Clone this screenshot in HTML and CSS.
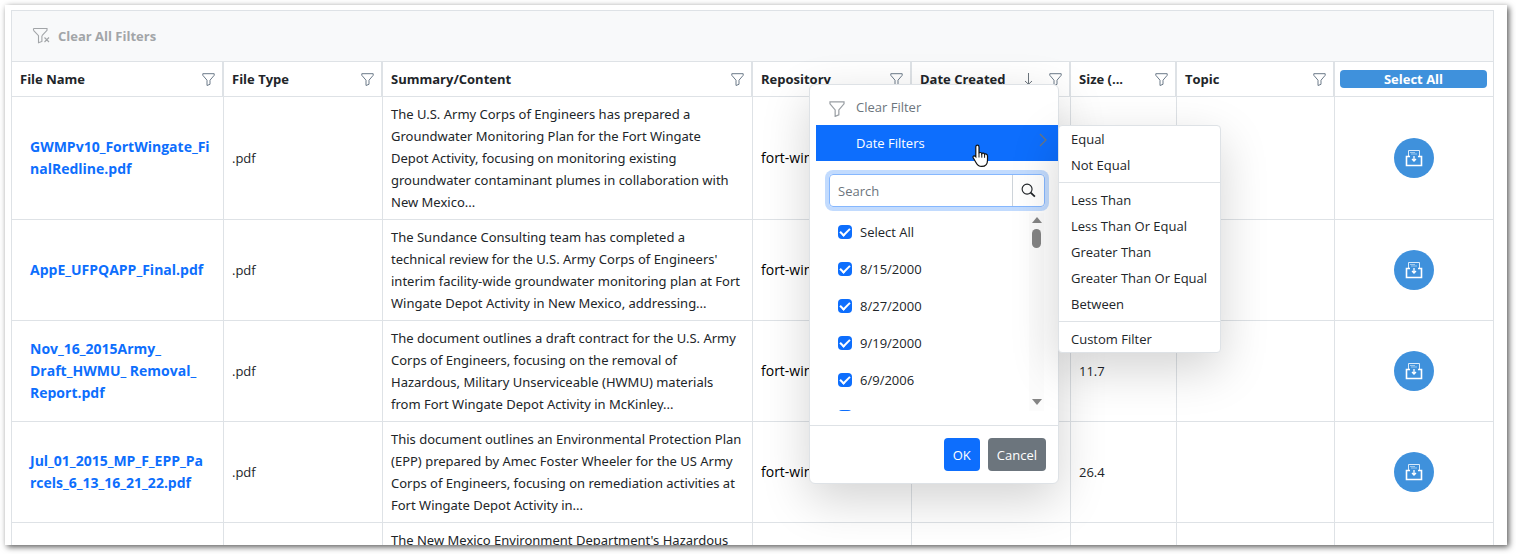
FILE: index.html
```html
<!DOCTYPE html>
<html lang="en">
<head>
<meta charset="UTF-8">
<meta name="viewport" content="width=device-width, initial-scale=1.0">
<title>Documents</title>
<link rel="stylesheet" href="styles.css">
</head>
<body>
<svg class="sprite" aria-hidden="true">
<symbol id="funnel" viewBox="0 0 13 13"><path d="M.8.7h11.4v1.6L8 7.2v4.1l-3 1.2V7.2L.8 2.3z" fill="none" stroke="currentColor"/></symbol>
<symbol id="inbox" viewBox="0 0 18 18">
<path d="M3.5 7V1.5h11V7" fill="none" stroke="#d9eafa"/>
<path d="M5 3.5h5M6 5h6" stroke="#9cc8ee"/>
<path d="M5 7.5H1.5v9h15v-9H13" fill="none" stroke="#fff" stroke-width="1.6"/>
<path d="M9 7v4.5M7 10l2 2 2-2" fill="none" stroke="#fff" stroke-width="1.3"/>
</symbol>
</svg>

<main class="window">
<div class="grid">
<div class="toolbar">
<button class="clear-all" type="button" disabled>
<svg class="clear-icon" viewBox="0 0 18 18"><path d="M1.5 1.5h13.5v1.8L10 8.7M1.5 3.3l5 5.4v7l3.4-1.3V8.7M1.5 1.5v1.8M12.5 10.5l4.5 4.5M17 10.5 12.5 15" fill="none" stroke="currentColor" stroke-width="1.1"/></svg>
Clear All Filters
</button>
</div>

<table>
<colgroup>
<col class="col-name"><col class="col-mid"><col class="col-summary"><col class="col-mid"><col class="col-mid"><col class="col-size"><col><col>
</colgroup>
<thead>
<tr>
<th><div class="head">File Name<svg class="funnel"><use href="#funnel"/></svg></div></th>
<th><div class="head">File Type<svg class="funnel"><use href="#funnel"/></svg></div></th>
<th><div class="head">Summary/Content<svg class="funnel"><use href="#funnel"/></svg></div></th>
<th><div class="head">Repository<svg class="funnel"><use href="#funnel"/></svg></div></th>
<th class="open">
<div class="head">Date Created
<svg class="sort" viewBox="0 0 9 12"><path d="M4.5 0v11M1 8l3.5 3.3L8 8" fill="none" stroke="currentColor"/></svg>
<svg class="funnel"><use href="#funnel"/></svg></div>

<div class="popup">
<button class="popup-item muted" type="button">
<svg class="item-icon"><use href="#funnel"/></svg>Clear Filter
</button>
<button class="popup-item active" type="button">Date Filters
<svg class="chevron" viewBox="0 0 8 14"><path d="m1 1 6 6-6 6" fill="none" stroke="currentColor" stroke-width="1.3"/></svg>
<svg class="cursor" viewBox="0 0 17 24"><path d="M5.4 1.2c1 0 1.6.7 1.6 1.7v6.3c.2-1 2.6-1 2.8.5.5-1 2.6-.7 2.8.7.7-.8 2.9-.4 2.9 1.6v4.2c0 3.7-2.2 6.2-5.8 6.2-3.3 0-4.6-1.7-5.9-4.2l-2.6-4.5c-.8-1.6 1-2.6 2.6-.9V2.9c0-1 .6-1.7 1.6-1.7z" fill="#fff" stroke="#111" stroke-width="1.2"/><path d="M7 9v4.5M9.8 9.7v4M12.6 10.6v3.2" stroke="#111"/></svg>
</button>
<div class="search">
<input type="text" placeholder="Search" aria-label="Search">
<button type="button" aria-label="Search values">
<svg viewBox="0 0 16 16"><circle cx="6.5" cy="6.5" r="5.3" fill="none" stroke="currentColor" stroke-width="1.2"/><path d="m10.3 10.3 4.5 4.2" stroke="currentColor" stroke-width="2"/></svg>
</button>
</div>
<div class="values">
<div class="value-list">
<label><input type="checkbox" checked>Select All</label>
<label><input type="checkbox" checked>8/15/2000</label>
<label><input type="checkbox" checked>8/27/2000</label>
<label><input type="checkbox" checked>9/19/2000</label>
<label><input type="checkbox" checked>6/9/2006</label>
<label><input type="checkbox" aria-label="Next value" checked></label>
</div>
<div class="scrollbar"><span class="arrow-up"></span><span class="thumb"></span><span class="arrow-down"></span></div>
</div>
<div class="popup-footer">
<button class="btn btn-primary" type="button">OK</button>
<button class="btn btn-secondary" type="button">Cancel</button>
</div>

<ul class="submenu">
<li>Equal</li>
<li>Not Equal</li>
<li class="separator"></li>
<li>Less Than</li>
<li>Less Than Or Equal</li>
<li>Greater Than</li>
<li>Greater Than Or Equal</li>
<li>Between</li>
<li class="separator"></li>
<li>Custom Filter</li>
</ul>
</div>
</th>
<th><div class="head">Size (...<svg class="funnel"><use href="#funnel"/></svg></div></th>
<th><div class="head">Topic<svg class="funnel"><use href="#funnel"/></svg></div></th>
<th class="select-cell"><button class="select-all" type="button">Select All</button></th>
</tr>
</thead>
<tbody>
<tr>
<td class="name"><a href="#">GWMPv10_FortWingate_Fi<br>nalRedline.pdf</a></td>
<td>.pdf</td>
<td class="summary">The U.S. Army Corps of Engineers has prepared a<br>Groundwater Monitoring Plan for the Fort Wingate<br>Depot Activity, focusing on monitoring existing<br>groundwater contaminant plumes in collaboration with<br>New Mexico...</td>
<td class="repo">fort-wingate</td>
<td></td>
<td></td>
<td></td>
<td class="action"><button type="button" aria-label="Add document"><svg><use href="#inbox"/></svg></button></td>
</tr>
<tr>
<td class="name"><a href="#">AppE_UFPQAPP_Final.pdf</a></td>
<td>.pdf</td>
<td class="summary">The Sundance Consulting team has completed a<br>technical review for the U.S. Army Corps of Engineers'<br>interim facility-wide groundwater monitoring plan at Fort<br>Wingate Depot Activity in New Mexico, addressing...</td>
<td class="repo">fort-wingate</td>
<td></td>
<td></td>
<td></td>
<td class="action"><button type="button" aria-label="Add document"><svg><use href="#inbox"/></svg></button></td>
</tr>
<tr>
<td class="name"><a href="#">Nov_16_2015Army_<br>Draft_HWMU_ Removal_<br>Report.pdf</a></td>
<td>.pdf</td>
<td class="summary">The document outlines a draft contract for the U.S. Army<br>Corps of Engineers, focusing on the removal of<br>Hazardous, Military Unserviceable (HWMU) materials<br>from Fort Wingate Depot Activity in McKinley...</td>
<td class="repo">fort-wingate</td>
<td></td>
<td>11.7</td>
<td></td>
<td class="action"><button type="button" aria-label="Add document"><svg><use href="#inbox"/></svg></button></td>
</tr>
<tr>
<td class="name"><a href="#">Jul_01_2015_MP_F_EPP_Pa<br>rcels_6_13_16_21_22.pdf</a></td>
<td>.pdf</td>
<td class="summary">This document outlines an Environmental Protection Plan<br>(EPP) prepared by Amec Foster Wheeler for the US Army<br>Corps of Engineers, focusing on remediation activities at<br>Fort Wingate Depot Activity in...</td>
<td class="repo">fort-wingate</td>
<td></td>
<td>26.4</td>
<td></td>
<td class="action"><button type="button" aria-label="Add document"><svg><use href="#inbox"/></svg></button></td>
</tr>
<tr class="last">
<td></td>
<td></td>
<td class="summary">The New Mexico Environment Department's Hazardous</td>
<td></td>
<td></td>
<td></td>
<td></td>
<td></td>
</tr>
</tbody>
</table>
</div>
</main>
</body>
</html>
```
FILE: styles.css
```css
* {
box-sizing: border-box;
}
body {
margin: 0;
padding: 5px 9px 9px 5px;
height: 100vh;
background: #fff;
color: #212529;
font-family: "Open Sans", "Noto Sans", sans-serif;
font-size: 13px;
line-height: 22px;
}
button, input {
font: inherit;
color: inherit;
}
button {
border: none;
background: none;
padding: 0;
cursor: pointer;
}
.sprite {
position: absolute;
width: 0;
height: 0;
}
.window {
height: 100%;
overflow: hidden;
padding: 5px 13px 0 6px;
background: #fff;
box-shadow: 2px 2px 6px rgba(0,0,0,0.65);
}
.grid {
border: 1px solid #dee2e6;
}
.toolbar {
display: flex;
align-items: center;
height: 51px;
padding: 0 20px;
background: #f8f9fa;
border-bottom: 1px solid #dee2e6;
}
.clear-all {
display: flex;
align-items: center;
gap: 8px;
font-weight: 700;
color: #a2a5a8;
}
.clear-icon {
width: 18px;
height: 18px;
}

/* table */
table {
width: 100%;
table-layout: fixed;
border-collapse: separate;
border-spacing: 0;
}
.col-name { width: 212px; }
.col-mid { width: 159px; }
.col-summary { width: 370px; }
.col-size { width: 106px; }
th, td {
text-align: left;
vertical-align: middle;
border-right: 1px solid #dee2e6;
border-bottom: 1px solid #dee2e6;
padding: 6px 8px;
}
th:last-child, td:last-child {
border-right: none;
}
th {
font-weight: 700;
white-space: nowrap;
box-shadow: inset -1px 0 #dee2e6;
}
th:last-child {
box-shadow: none;
}
.head {
display: flex;
align-items: center;
}
.funnel {
width: 13px;
height: 13px;
margin-left: auto;
color: #6c7a89;
}
.sort {
width: 9px;
height: 12px;
margin-left: auto;
color: #6c757d;
}
.sort + .funnel {
margin-left: 16px;
}
th.select-cell {
padding: 0 6px 0 5px;
}
.select-all {
display: block;
width: 100%;
height: 18px;
line-height: 18px;
border-radius: 4px;
background: #3f91dc;
color: #fff;
font-weight: 700;
}
.name {
padding-left: 18px;
font-size: 14px;
}
.name a {
color: #0d6efd;
font-weight: 700;
text-decoration: none;
}
.summary {
font-family: "Noto Sans", "Open Sans", sans-serif;
white-space: nowrap;
}
.repo {
font-size: 14px;
color: #000;
}
.action {
text-align: center;
}
.action button {
display: inline-flex;
align-items: center;
justify-content: center;
vertical-align: middle;
width: 40px;
height: 40px;
border-radius: 50%;
background: #3f91dc;
}
.action svg {
width: 18px;
height: 18px;
}
.last td {
height: 101px;
vertical-align: top;
}

/* filter popup */
.open {
position: relative;
z-index: 5;
}
.popup {
position: absolute;
top: 22px;
right: 11px;
width: 250px;
padding-top: 4px;
background: #fff;
border: 1px solid #dee2e6;
border-radius: 6px;
box-shadow: 0 16px 48px rgba(0,0,0,0.175);
font-weight: 400;
}
.popup-item {
position: relative;
display: flex;
align-items: center;
width: calc(100% - 6px);
height: 36px;
margin-left: 6px;
padding-left: 40px;
}
.popup-item.muted {
color: #6c757d;
}
.popup-item.active {
background: #0d6efd;
color: #fff;
}
.item-icon {
position: absolute;
left: 13px;
top: 12px;
width: 16px;
height: 16px;
color: #9a9fa4;
}
.chevron {
width: 8px;
height: 14px;
margin: 0 11px 6px auto;
color: #6c757d;
}
.cursor {
position: absolute;
right: 69px;
top: 19px;
width: 17px;
height: 24px;
}
.search {
display: flex;
height: 33px;
margin: 13px 13px 6px 19px;
border: 1px solid #86b7fe;
border-radius: 4px;
box-shadow: 0 0 0 4px rgba(13,110,253,0.25);
}
.search input {
flex: 1;
min-width: 0;
border: none;
outline: none;
background: none;
padding: 0 8px;
}
.search input::placeholder {
color: #6c757d;
opacity: 1;
}
.search button {
display: flex;
align-items: center;
justify-content: center;
width: 32px;
border-left: 1px solid #ced4da;
}
.search svg {
width: 15px;
height: 15px;
}
.values {
display: flex;
height: 198px;
margin: 0 14px 14px 28px;
overflow: hidden;
}
.value-list {
flex: 1;
}
.value-list label {
display: flex;
align-items: center;
gap: 8px;
height: 37px;
}
.value-list input {
appearance: none;
width: 14px;
height: 14px;
margin: 0;
border-radius: 4px;
background: #0d6efd;
display: grid;
place-items: center;
}
.value-list input::after {
content: "";
width: 8px;
height: 4px;
margin-bottom: 2px;
border: solid #fff;
border-width: 0 0 2px 2px;
transform: rotate(-45deg);
}
.scrollbar {
display: flex;
flex-direction: column;
align-items: center;
width: 15px;
padding: 4px 0 6px;
background: #fcfcfc;
}
.arrow-up, .arrow-down {
border: 5px solid transparent;
border-top-width: 0;
border-bottom: 6px solid #858585;
}
.thumb {
width: 9px;
height: 19px;
margin: 6px 0 auto;
border-radius: 5px;
background: #858585;
}
.arrow-down {
transform: rotate(180deg);
}
.popup-footer {
display: flex;
justify-content: flex-end;
gap: 8px;
padding: 12px;
border-top: 1px solid #dee2e6;
}
.btn {
height: 33px;
padding: 0 9px;
border-radius: 4px;
color: #fff;
}
.btn-primary { background: #0d6efd; }
.btn-secondary { background: #6c757d; }

.submenu {
position: absolute;
left: 100%;
top: 40px;
width: 163px;
margin: 0;
padding: 0;
list-style: none;
background: #fff;
border: 1px solid #dee2e6;
border-radius: 4px;
box-shadow: 0 16px 48px rgba(0,0,0,0.175);
}
.submenu li {
height: 26px;
line-height: 26px;
padding: 0 12px;
}
.submenu .separator {
height: 1px;
margin: 4px 0;
background: #dee2e6;
}
```
